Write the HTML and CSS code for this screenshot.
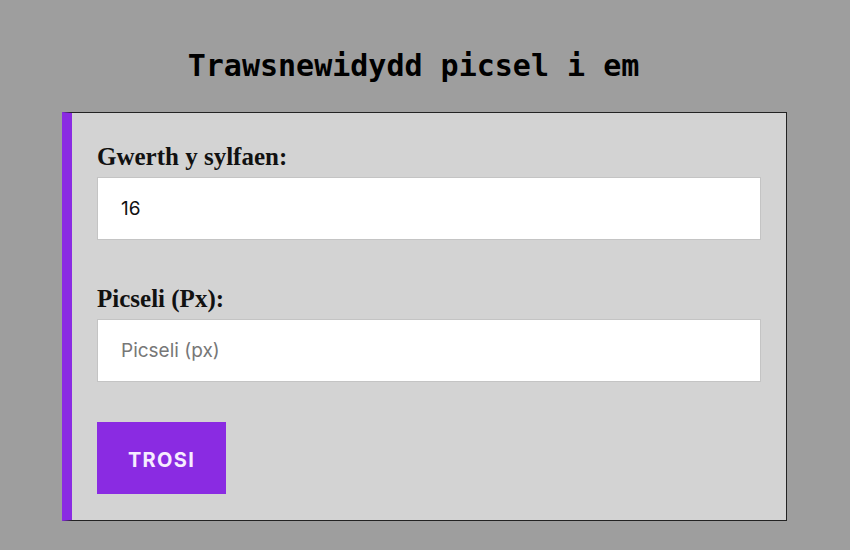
FILE: index.html
```
<!DOCTYPE html>
<html lang="cy">
<head>
<meta charset="utf-8">
<title>Trawsnewidydd picsel i em</title>
<link rel="stylesheet" href="styles.css">
</head>
<body>
<main class="page">
  <h1 class="title">Trawsnewidydd picsel i em</h1>
  <form class="card">
    <label class="label" for="base">Gwerth y sylfaen:</label>
    <input class="field" id="base" type="text" value="16">
    <label class="label label-second" for="px">Picseli (Px):</label>
    <input class="field" id="px" type="text" placeholder="Picseli (px)">
    <button class="button" type="button">TROSI</button>
  </form>
</main>
</body>
</html>
```
FILE: styles.css
```
html, body {
  margin: 0;
  padding: 0;
}
body {
  background: #9e9e9e;
  width: 850px;
  height: 550px;
  overflow: hidden;
}
.page {
  display: flex;
  flex-direction: column;
  padding: 47px 63px 0 62px;
}
.title {
  margin: 0 0 27px 0;
  padding-right: 22px;
  text-align: center;
  font-family: "DejaVu Sans Mono", monospace;
  font-weight: bold;
  font-size: 30px;
  line-height: 38px;
  color: #000;
}
.card {
  display: flex;
  flex-direction: column;
  align-items: flex-start;
  background: #d3d3d3;
  border: 1px solid #222;
  border-left: 10px solid #8a2be2;
  padding: 30px 25px 26px 25px;
  margin: 0;
}
.label {
  font-family: "Liberation Serif", serif;
  font-weight: bold;
  font-size: 25px;
  line-height: 28px;
  color: #111;
  margin-bottom: 6px;
}
.label-second {
  margin-top: 45px;
}
.field {
  box-sizing: border-box;
  width: 100%;
  height: 63px;
  margin: 0;
  padding: 0 23px;
  border: 1px solid #c4c4c4;
  background: #fff;
  font-family: Inter, sans-serif;
  font-size: 19px;
  color: #111;
  outline: none;
}
.field::placeholder {
  color: #777;
}
.button {
  margin-top: 40px;
  width: 129px;
  height: 72px;
  border: none;
  background: #8a2be2;
  color: #f6ecff;
  font-family: Inter, sans-serif;
  font-weight: bold;
  font-size: 20px;
  letter-spacing: 1.3px;
  padding: 3px 0 0 0;
}
```
